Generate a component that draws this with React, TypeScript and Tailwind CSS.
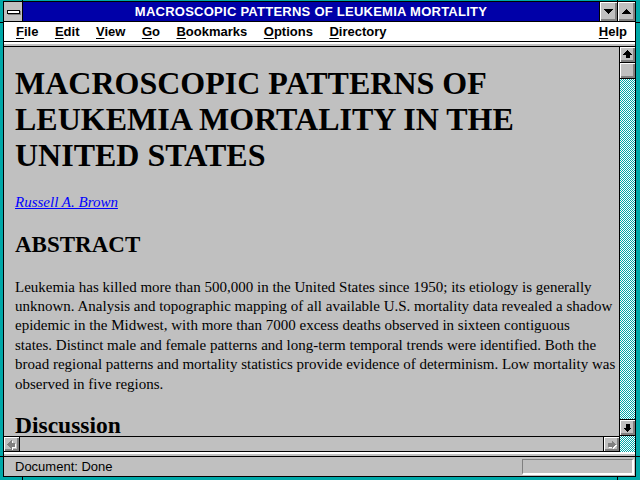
import React from "react";

const bevel =
  "bg-[#c0c0c0] shadow-[inset_1px_1px_0_#ffffff,inset_-1px_-1px_0_#808080,inset_-2px_-2px_0_#808080]";
const dither =
  "bg-[image:repeating-conic-gradient(#00a8a8_0%_25%,#ffffff_0%_50%)] bg-[length:2px_2px]";

function Arrow({ dir, disabled }: { dir: "up" | "down" | "left" | "right"; disabled?: boolean }) {
  const pts: Record<string, string> = {
    up: "7.5,3 12,7.5 9.5,7.5 9.5,11 5.5,11 5.5,7.5 3,7.5",
    down: "7.5,12 12,7.5 9.5,7.5 9.5,4 5.5,4 5.5,7.5 3,7.5",
    left: "3,7.5 7.5,3 7.5,5.5 11,5.5 11,9.5 7.5,9.5 7.5,12",
    right: "12,7.5 7.5,3 7.5,5.5 4,5.5 4,9.5 7.5,9.5 7.5,12",
  };
  return (
    <svg width="15" height="15" viewBox="0 0 15 15" shapeRendering="crispEdges">
      {disabled && <polygon points={pts[dir]} fill="#ffffff" transform="translate(1 1)" />}
      <polygon points={pts[dir]} fill={disabled ? "#808080" : "#000000"} />
    </svg>
  );
}

function Tri({ up }: { up?: boolean }) {
  return (
    <svg width="9" height="5" viewBox="0 0 9 5" shapeRendering="crispEdges">
      <polygon points={up ? "4.5,0 9,5 0,5" : "0,0 9,0 4.5,5"} fill="#000" />
    </svg>
  );
}

const menus = ["File", "Edit", "View", "Go", "Bookmarks", "Options", "Directory"];

// abstract lines as they wrap in the original window
const abstract = [
  "Leukemia has killed more than 500,000 in the United States since 1950; its etiology is generally",
  "unknown. Analysis and topographic mapping of all available U.S. mortality data revealed a shadow",
  "epidemic in the Midwest, with more than 7000 excess deaths observed in sixteen contiguous",
  "states. Distinct male and female patterns and long-term temporal trends were identified. Both the",
  "broad regional patterns and mortality statistics provide evidence of determinism. Low mortality was",
  "observed in five regions.",
];

function MenuItem({ label }: { label: string }) {
  return (
    <span>
      <span className="underline underline-offset-2">{label[0]}</span>
      {label.slice(1)}
    </span>
  );
}

export default function App() {
  return (
    <div className="relative w-[640px] h-[480px] overflow-hidden bg-[#00a8a8] pt-px pl-[3px] pr-[4px] pb-[3px]">
      {/* resize corner marks on the frame */}
      <div className="absolute left-[22px] top-0 w-px h-[2px] bg-black" />
      <div className="absolute right-[22px] top-0 w-px h-[2px] bg-black" />
      <div className="absolute left-[22px] bottom-0 w-px h-[4px] bg-black" />
      <div className="absolute right-[22px] bottom-0 w-px h-[4px] bg-black" />
      <div className="absolute left-0 top-[22px] w-[3px] h-px bg-black" />
      <div className="absolute right-0 top-[22px] w-[4px] h-px bg-black" />
      <div className="absolute left-0 bottom-[23px] w-[3px] h-px bg-black" />
      <div className="absolute right-0 bottom-[23px] w-[4px] h-px bg-black" />

      <div className="h-full flex flex-col border border-black bg-[#c0c0c0] font-['Liberation_Sans',Arial,sans-serif]">
        {/* title bar */}
        <div className="h-[20px] flex border-b border-black">
          <div className="w-[19px] border-r border-black bg-[#c0c0c0] flex items-center justify-center">
            <div className="w-[13px] h-[4px] bg-white border border-black shadow-[1px_1px_0_#808080]" />
          </div>
          <div className="flex-1 bg-[#0000a8] text-white font-bold text-[13px] tracking-[0.25px] flex items-center justify-center">
            MACROSCOPIC PATTERNS OF LEUKEMIA MORTALITY
          </div>
          <div className={`w-[18px] border-l border-black flex items-center justify-center ${bevel}`}>
            <Tri />
          </div>
          <div className={`w-[18px] border-l border-black flex items-center justify-center ${bevel}`}>
            <Tri up />
          </div>
        </div>

        {/* menu bar */}
        <div className="h-[20px] bg-white border-b border-black flex items-center pl-[12px] pr-[8px] text-[13px] font-bold text-black">
          <div className="flex gap-[16.5px]">
            {menus.map((m) => (
              <MenuItem key={m} label={m} />
            ))}
          </div>
          <div className="ml-auto">
            <MenuItem label="Help" />
          </div>
        </div>
        <div className="h-[5px] border-t-2 border-t-white border-b border-b-black" />

        {/* document area with scrollbars */}
        <div className="flex-1 flex min-h-0">
          <div className="flex-1 flex flex-col min-w-0">
            <div className="flex-1 overflow-hidden pt-[18px] pl-[11px] pr-[10px] font-['Liberation_Serif','Times_New_Roman',serif] text-black">
              <h1 className="text-[32px] leading-[36px] font-bold">
                MACROSCOPIC PATTERNS OF LEUKEMIA MORTALITY IN THE UNITED STATES
              </h1>
              <p className="mt-[20px] text-[15px] leading-[19.5px]">
                <a href="#" className="italic text-[#0000ff] underline">
                  Russell A. Brown
                </a>
              </p>
              <h2 className="mt-[18px] text-[23px] leading-[28px] font-bold">ABSTRACT</h2>
              <p className="mt-[19px] text-[15px] leading-[19.4px] whitespace-nowrap">
                {abstract.map((line, i) => (
                  <React.Fragment key={i}>
                    {line}
                    {i < abstract.length - 1 && <br />}
                  </React.Fragment>
                ))}
              </p>
              <h2 className="mt-[19px] text-[23.5px] leading-[24px] font-bold">Discussion</h2>
            </div>
            {/* horizontal scrollbar (disabled) */}
            <div className="h-[16px] flex border-t border-b border-black">
              <div className={`w-[16px] border-r border-black flex items-center justify-center ${bevel}`}>
                <Arrow dir="left" disabled />
              </div>
              <div className="flex-1 bg-[#c0c0c0]" />
              <div className={`w-[16px] border-l border-black flex items-center justify-center ${bevel}`}>
                <Arrow dir="right" disabled />
              </div>
            </div>
          </div>

          {/* vertical scrollbar */}
          <div className="w-[16px] border-l border-black flex flex-col">
            <div className={`h-[16px] border-b border-black flex items-center justify-center ${bevel}`}>
              <Arrow dir="up" />
            </div>
            <div className={`h-[16px] border-b border-black ${bevel}`} />
            <div className={`flex-1 ${dither}`} />
            <div className={`h-[17px] border-t border-b border-black flex items-center justify-center ${bevel}`}>
              <Arrow dir="down" />
            </div>
            <div className={`h-[16px] ${dither}`} />
          </div>
        </div>

        <div className="h-[5px] border-t-2 border-t-white border-b border-b-black" />

        {/* status bar */}
        <div className="h-[19px] flex items-center pl-[11px] pr-px text-[13px] text-black">
          <span>Document: Done</span>
          <div className="ml-auto w-[112px] h-[16px] border-t border-l border-t-[#808080] border-l-[#808080] border-b-2 border-r-2 border-b-white border-r-white" />
        </div>
      </div>
    </div>
  );
}
